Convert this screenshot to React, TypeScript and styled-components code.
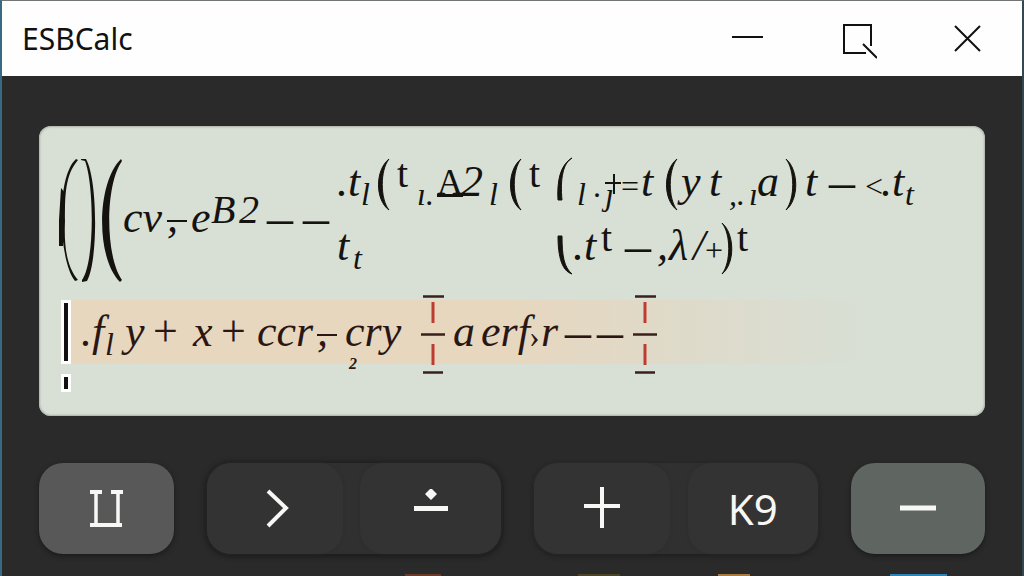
import React from "react";
import styled, { createGlobalStyle, css } from "styled-components";

const GlobalStyle = createGlobalStyle`
  * { box-sizing: border-box; }
  body { margin: 0; background: #2a2a2a; }
  #root { min-height: 100vh; display: flex; }
`;

const Window = styled.main`
  flex: 1;
  min-height: 100vh;
  display: flex;
  flex-direction: column;
  background: #2a2a2a;
  border-top: 1px solid #717573;
  border-left: 2px solid #386b82;
  border-right: 2px solid #34484f;
  overflow: hidden;
`;

const TitleBar = styled.header`
  height: 75px;
  flex: none;
  display: flex;
  align-items: center;
  justify-content: space-between;
  padding: 0 35px 0 20px;
  background: #fefefe;
`;

const Title = styled.h1`
  margin: 0;
  font: 400 30px/40px "Noto Sans", "Open Sans", sans-serif;
  color: #111;
`;

const WindowControls = styled.div`
  display: flex;
  gap: 70px;
`;

const WindowButton = styled.button`
  width: 40px;
  height: 40px;
  padding: 0;
  border: 0;
  background: none;
  svg { display: block; }
`;

const Body = styled.section`
  flex: 1;
  display: flex;
  flex-direction: column;
  padding: 50px 37px 0;
`;

const Display = styled.section`
  height: 290px;
  flex: none;
  padding: 32px 20px 0;
  border-radius: 12px;
  background: #d8dfd5;
  box-shadow: inset 0 0 2px 1px #aab0a9;
  color: #14130f;
  overflow: hidden;
  white-space: nowrap;
`;

const Expression = styled.div`
  display: flex;
  height: 142px;
`;

const Row = styled.div`
  display: flex;
  align-items: flex-start;
  height: 64px;
`;

const Branches = styled.div`
  padding-top: 4px;
`;

const levels = {
  base: css`font-size: 44px;`,
  roman: css`font-size: 44px; font-style: normal;`,
  sup: css`font-size: 40px; font-style: normal; margin-top: -8px;`,
  sub: css`font-size: 32px; margin-top: 12px;`,
  mark: css`font-size: 32px; font-style: normal; margin-top: 4px;`,
  dash: css`font-size: 52px; font-style: normal;`,
  power: css`font-size: 40px; margin-top: -8px;`,
  fence: css`margin-top: -4px;`,
  barred: css`
    font-size: 36px;
    font-style: normal;
    text-decoration: underline 3px;
    text-underline-offset: 0;
  `,
};

type Level = keyof typeof levels;

const Term = styled.span<{ $w: number; $level?: Level }>`
  flex: none;
  width: ${(p) => p.$w}px;
  height: 40px;
  font-family: "Liberation Serif", serif;
  font-style: italic;
  line-height: 40px;
  ${(p) => levels[p.$level ?? "base"]}
  svg { display: block; overflow: visible; }
`;

/* A comma with a short minus rule above it. */
const RuledComma = styled(Term)`
  background: linear-gradient(currentColor, currentColor) 0 22px / 20px 2px no-repeat;
`;

/* A hooked stem that is extended upwards and crossed. */
const CrossedStem = styled(Term)`
  background:
    linear-gradient(currentColor, currentColor) 0 8px / 18px 2px no-repeat,
    linear-gradient(currentColor, currentColor) 8px 0 / 2px 20px no-repeat;
`;

const LeadTerms = styled(Row)`
  padding-top: 40px;
  height: 124px;
`;

const TallFences = styled.svg`
  flex: none;
  display: block;
`;

const EntryRow = styled.div`
  display: flex;
  height: 64px;
`;

const Caret = styled.span<{ $h: number }>`
  flex: none;
  display: block;
  width: 10px;
  height: ${(p) => p.$h}px;
  margin-left: 2px;
  border: 3px solid #fff;
  background: #111;
`;

const Entry = styled.div`
  flex: 0 1 800px;
  display: flex;
  align-items: flex-start;
  padding: 12px 0 0 10px;
  background: linear-gradient(90deg, #e7d7bf 0 55%, #dfdac9 75%, #d8dfd5);
  color: #2a1713;
`;

const Gate = styled.svg`
  flex: none;
  display: block;
  margin: -17px 8px 0 0;
`;

const Stack = styled.span`
  display: flex;
  flex-direction: column;
`;

const Divisor = styled.span`
  margin: 4px 0 0 4px;
  font: italic 700 16px/16px "Liberation Serif", serif;
`;

const SecondCaret = styled.div`
  padding-top: 10px;
`;

const Keypad = styled.section`
  display: grid;
  grid-template-columns: 135fr 293fr 283fr 134fr;
  gap: 33px;
  padding-top: 47px;
`;

const KeyGroup = styled.div<{ $deep?: boolean }>`
  display: flex;
  justify-content: space-between;
  border-radius: 24px;
  background: #303030;
  box-shadow: ${(p) => (p.$deep ? "0 1px 5px 2px #1c1c1c" : "0 2px 5px #1e1e1e")};
`;

const Key = styled.button<{ $tone?: "grey" | "green"; $basis?: number }>`
  flex: 0 1 ${(p) => (p.$tone ? "100%" : `${p.$basis ?? 136}px`)};
  height: 91px;
  display: flex;
  align-items: center;
  justify-content: center;
  padding: 0;
  border: 0;
  border-radius: 24px;
  color: #f7f7f5;
  background: ${(p) => (p.$tone === "grey" ? "#585858" : p.$tone === "green" ? "#5f6661" : "#333")};
  box-shadow: ${(p) => (p.$tone ? "0 2px 5px #1a1a1a" : "0 0 3px #2d2d2d")};
  font: 400 42px/48px "Noto Sans", sans-serif;
`;

const Taskbar = styled.footer`
  flex: none;
  display: grid;
  grid-template-columns: 403fr 36fr 137fr 42fr 98fr 32fr 140fr 57fr 75fr;
  height: 2px;
`;

const Sliver = styled.i<{ $c: string }>`
  background: ${(p) => p.$c};
`;

type FenceKind = "open" | "close" | "top" | "bottom";

const fencePaths: Record<FenceKind, string> = {
  open: "M12 1C-2 12 -2 42 12 52C3 41 3 12 12 1Z",
  close: "M1 1C14 12 14 42 1 52C10 41 10 12 1 1Z",
  top: "M15 0C6 5 3 21 5 42L1 42C0 23 3 7 15 0Z",
  bottom: "M1 14L5 14C5 34 7 45 15 52C5 49 1 35 1 14Z",
};

function Fence({ kind, w }: { kind: FenceKind; w: number }) {
  return (
    <Term $w={w} $level="fence">
      <svg width="16" height="54" aria-hidden="true">
        <path d={fencePaths[kind]} fill="currentColor" stroke="currentColor" strokeWidth="1" />
      </svg>
    </Term>
  );
}

function GateMark() {
  return (
    <Gate width="24" height="80" fill="none" aria-hidden="true">
      <path d="M2 1.500H23M0 39.500H24M2 77.500H22" stroke="#3b211b" strokeWidth="2.500" />
      <path d="M12 7V28M12 49V70" stroke="#bd3c31" strokeWidth="3" />
    </Gate>
  );
}

export default function App() {
  return (
    <>
      <GlobalStyle />
      <Window>
        <TitleBar>
          <Title>ESBCalc</Title>
          <WindowControls>
            <WindowButton aria-label="Minimize">
              <svg width="40" height="40"><path d="M5 18H36" stroke="#111" strokeWidth="2" /></svg>
            </WindowButton>
            <WindowButton aria-label="Maximize">
              <svg width="40" height="40" fill="none" stroke="#111" strokeWidth="2">
                <path d="M29 34H7V6H34V27M26 25L40 39" />
              </svg>
            </WindowButton>
            <WindowButton aria-label="Close">
              <svg width="40" height="40" stroke="#111" strokeWidth="2"><path d="M8 7L33 32M33 7L8 32" /></svg>
            </WindowButton>
          </WindowControls>
        </TitleBar>

        <Body>
          <Display aria-label="Calculator display">
            <Expression>
              <TallFences width="64" height="124" fill="currentColor" aria-hidden="true">
                <path d="M17 1C-4 20 0 104 16 123L19 122C7 108 5 86 6 63C6 38 6 17 19 2Z" />
                <path d="M0 88V62L2 30L6 35L4 88Z" />
                <path d="M22 1H27C39 22 39 104 28 123L23 124V122C36 104 35 26 26 3L22 2Z" />
                <path d="M62 1C38 24 36 99 61 124L63 122C46 98 46 27 63 3Z" />
              </TallFences>
              <LeadTerms>
                <Term $w={44}>cv</Term>
                <RuledComma $w={24}>,</RuledComma>
                <Term $w={20}>e</Term>
                <Term $w={28} $level="power">B</Term>
                <Term $w={28} $level="power">2</Term>
                <Term $w={36} $level="dash">–</Term>
                <Term $w={34} $level="dash">–</Term>
              </LeadTerms>
              <Branches>
                <Row>
                  <Term $w={24}>.t</Term>
                  <Term $w={16} $level="sub">l</Term>
                  <Fence kind="open" w={20} />
                  <Term $w={20} $level="sup">t</Term>
                  <Term $w={20} $level="sub">ı.</Term>
                  <Term $w={24} $level="barred">A</Term>
                  <Term $w={28}>2</Term>
                  <Term $w={20} $level="sub">l</Term>
                  <Fence kind="open" w={20} />
                  <Term $w={28} $level="sup">t</Term>
                  <Fence kind="top" w={20} />
                  <Term $w={16} $level="sub">l</Term>
                  <Term $w={12} $level="mark">.</Term>
                  <CrossedStem $w={16} $level="sub">ȷ</CrossedStem>
                  <Term $w={20} $level="mark">=</Term>
                  <Term $w={24}>t</Term>
                  <Fence kind="open" w={16} />
                  <Term $w={28}>y</Term>
                  <Term $w={20}>t</Term>
                  <Term $w={20} $level="sub">,.</Term>
                  <Term $w={8} $level="sub">ı</Term>
                  <Term $w={28}>a</Term>
                  <Fence kind="close" w={20} />
                  <Term $w={24}>t</Term>
                  <Term $w={36} $level="dash">–</Term>
                  <Term $w={16} $level="mark">&lt;</Term>
                  <Term $w={24}>.t</Term>
                  <Term $w={12} $level="sub">t</Term>
                </Row>
                <Row>
                  <Term $w={16}>t</Term>
                  <Term $w={204} $level="sub">t</Term>
                  <Fence kind="bottom" w={16} />
                  <Term $w={28}>.t</Term>
                  <Term $w={24} $level="sup">t</Term>
                  <Term $w={32} $level="dash">–</Term>
                  <Term $w={12}>,</Term>
                  <Term $w={24}>λ</Term>
                  <Term $w={12}>/</Term>
                  <Term $w={16} $level="mark">+</Term>
                  <Fence kind="close" w={16} />
                  <Term $w={16} $level="sup">t</Term>
                </Row>
              </Branches>
            </Expression>

            <EntryRow>
              <Caret $h={64} />
              <Entry>
                <Term $w={24}>.f</Term>
                <Term $w={20} $level="sub">l</Term>
                <Term $w={28}>y</Term>
                <Term $w={40} $level="roman">+</Term>
                <Term $w={28}>x</Term>
                <Term $w={36} $level="roman">+</Term>
                <Term $w={60}>ccr</Term>
                <RuledComma $w={28}>,</RuledComma>
                <Stack>
                  <Term $w={76}>cry</Term>
                  <Divisor>2</Divisor>
                </Stack>
                <GateMark />
                <Term $w={28}>a</Term>
                <Term $w={48}>erf</Term>
                <Term $w={12} $level="mark">›</Term>
                <Term $w={24}>r</Term>
                <Term $w={32} $level="dash">–</Term>
                <Term $w={36} $level="dash">–</Term>
                <GateMark />
              </Entry>
            </EntryRow>
            <SecondCaret>
              <Caret $h={18} />
            </SecondCaret>
          </Display>

          <Keypad aria-label="Keypad">
            <Key $tone="grey" aria-label="Bracket">
              <svg width="36" height="40" fill="none" stroke="currentColor">
                <path d="M1 3H13M22 3H34M1 36H33" strokeWidth="4" />
                <path d="M7 3V36M29 3V36" strokeWidth="3.500" />
              </svg>
            </Key>
            <KeyGroup $deep>
              <Key aria-label="Next">
                <svg width="28" height="40" fill="none" stroke="currentColor" strokeWidth="4">
                  <path d="M7 2L25 19L7 37" />
                </svg>
              </Key>
              <Key $basis={141} aria-label="Divide">
                <svg width="36" height="40" fill="currentColor">
                  <path d="M18 -1L24 5L18 11L12 5ZM1 17H35V22H1Z" />
                </svg>
              </Key>
            </KeyGroup>
            <KeyGroup>
              <Key aria-label="Plus">
                <svg width="38" height="44" fill="none" stroke="currentColor" strokeWidth="4">
                  <path d="M19 0V41M1 19H37" />
                </svg>
              </Key>
              <Key $basis={130}>K9</Key>
            </KeyGroup>
            <Key $tone="green" aria-label="Minus">
              <svg width="36" height="40" stroke="currentColor" strokeWidth="5"><path d="M0 19H36" /></svg>
            </Key>
          </Keypad>
        </Body>
        <Taskbar>
          <Sliver $c="#2a2a2a" />
          <Sliver $c="#6b3a26" />
          <Sliver $c="#2a2a2a" />
          <Sliver $c="#4d4426" />
          <Sliver $c="#2a2a2a" />
          <Sliver $c="#a87a3c" />
          <Sliver $c="#2a2a2a" />
          <Sliver $c="#2d83b7" />
          <Sliver $c="#2a2a2a" />
        </Taskbar>
      </Window>
    </>
  );
}
